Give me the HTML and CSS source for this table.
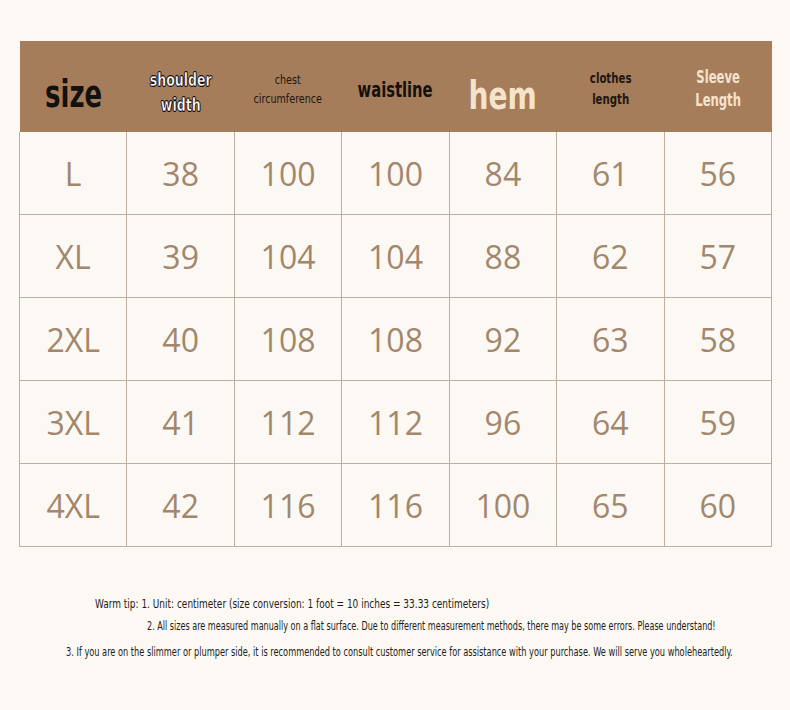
FILE: index.html
```html
<!DOCTYPE html>
<html>
<head>
<meta charset="utf-8">
<link rel="stylesheet" href="styles.css">
</head>
<body>
<div class="page">
  <table class="sizes">
    <thead>
      <tr>
        <th><span class="h h-size">size</span></th>
        <th><span class="h h-shoulder">shoulder<br>width</span></th>
        <th><span class="h h-chest">chest<br>circumference</span></th>
        <th><span class="h h-waist">waistline</span></th>
        <th><span class="h h-hem">hem</span></th>
        <th><span class="h h-clothes">clothes<br>length</span></th>
        <th><span class="h h-sleeve">Sleeve<br>Length</span></th>
      </tr>
    </thead>
    <tbody>
      <tr><td>L</td><td>38</td><td>100</td><td>100</td><td>84</td><td>61</td><td>56</td></tr>
      <tr><td>XL</td><td>39</td><td>104</td><td>104</td><td>88</td><td>62</td><td>57</td></tr>
      <tr><td>2XL</td><td>40</td><td>108</td><td>108</td><td>92</td><td>63</td><td>58</td></tr>
      <tr><td>3XL</td><td>41</td><td>112</td><td>112</td><td>96</td><td>64</td><td>59</td></tr>
      <tr><td>4XL</td><td>42</td><td>116</td><td>116</td><td>100</td><td>65</td><td>60</td></tr>
    </tbody>
  </table>
  <div class="notes">
    <p class="note n1"><span>Warm tip: 1. Unit: centimeter (size conversion: 1 foot = 10 inches = 33.33 centimeters)</span></p>
    <p class="note n2"><span>2. All sizes are measured manually on a flat surface. Due to different measurement methods, there may be some errors. Please understand!</span></p>
    <p class="note n3"><span>3. If you are on the slimmer or plumper side, it is recommended to consult customer service for assistance with your purchase. We will serve you wholeheartedly.</span></p>
  </div>
</div>
</body>
</html>
```

FILE: styles.css
```css
html, body {
  margin: 0;
  padding: 0;
  background: #fcf9f4;
  overflow: hidden;
}
.page {
  width: 790px;
  height: 710px;
  padding: 41px 0 0 19px;
  box-sizing: border-box;
  overflow: hidden;
}
.sizes {
  border-collapse: collapse;
  table-layout: fixed;
  width: 753px;
}
.sizes th {
  background: #a57d5b;
  height: 91px;
  padding: 0;
  text-align: center;
  vertical-align: middle;
  font-weight: normal;
  border: 0;
}
.sizes td {
  height: 82px;
  padding: 0;
  text-align: center;
  vertical-align: middle;
  border: 1px solid #bcaea0;
  font-family: "Open Sans", "Noto Sans", sans-serif;
  font-size: 32px;
  color: #a2876c;
}
.sizes tbody tr:first-child td {
  border-top: 0;
}
.h {
  display: inline-block;
  font-family: "DejaVu Sans Condensed", "DejaVu Sans", sans-serif;
  font-stretch: condensed;
  transform: scaleX(0.82);
}
.h-size {
  font-size: 37px;
  font-weight: bold;
  color: #141010;
  transform: scaleX(0.78);
  margin-top: 16px;
}
.h-shoulder {
  font-size: 17px;
  line-height: 25px;
  font-weight: bold;
  color: #fff;
  -webkit-text-stroke: 0.4px #000;
  text-shadow: 1px 0 0 #1a1010, -1px 0 0 #1a1010, 0 1px 0 #1a1010, 0 -1px 0 #1a1010;
  margin-top: 12px;
}
.h-chest {
  font-size: 13px;
  line-height: 19px;
  color: #1e1612;
  margin-top: 4px;
}
.h-waist {
  font-size: 21px;
  color: #141010;
  font-weight: bold;
  transform: scaleX(0.78);
  margin-top: 7px;
}
.h-hem {
  font-size: 39px;
  color: #f6e3cb;
  font-weight: bold;
  transform: scaleX(0.8);
  margin-top: 18px;
}
.h-clothes {
  font-size: 14.5px;
  line-height: 21px;
  color: #1e1612;
  font-weight: bold;
  transform: scaleX(0.78);
  margin-top: 4px;
}
.h-sleeve {
  font-size: 17px;
  line-height: 23px;
  color: #f6e3cb;
  font-weight: bold;
  transform: scaleX(0.76);
  margin-top: 5px;
}
.notes {
  margin-top: 47px;
  font-family: "DejaVu Sans Condensed", "DejaVu Sans", sans-serif;
  font-stretch: condensed;
  color: #231c18;
  width: 752px;
  overflow: hidden;
}
.note {
  margin: 0;
  white-space: nowrap;
  overflow: hidden;
}
.note span {
  display: inline-block;
  transform-origin: left center;
}
.n1 {
  padding-left: 76px;
  font-size: 13px;
  line-height: 20px;
}
.n1 span {
  transform: scaleX(0.767);
}
.n2 {
  padding-left: 128px;
  font-size: 12px;
  margin-top: 3px;
  line-height: 18px;
}
.n2 span {
  transform: scaleX(0.748);
}
.n3 {
  padding-left: 47px;
  font-size: 12px;
  margin-top: 8px;
  line-height: 18px;
}
.n3 span {
  transform: scaleX(0.762);
}
```
